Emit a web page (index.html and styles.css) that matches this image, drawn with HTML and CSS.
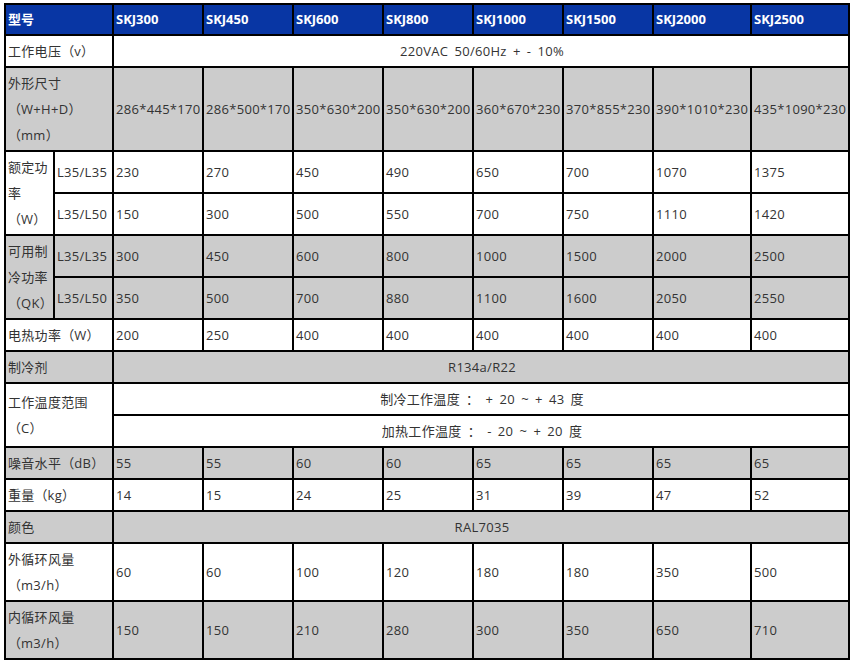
FILE: index.html
```html
<!DOCTYPE html>
<html lang="zh-CN">
<head>
<meta charset="utf-8">
<title>SKJ 参数表</title>
<link rel="stylesheet" href="styles.css">
</head>
<body>
<table class="spec">
  <colgroup>
    <col class="c-l1"><col class="c-l2">
    <col class="c-d"><col class="c-d"><col class="c-d"><col class="c-d"><col class="c-d"><col class="c-d">
    <col class="c-w"><col class="c-w">
  </colgroup>
  <tr class="head">
    <td colspan="2">型号</td><td>SKJ300</td><td>SKJ450</td><td>SKJ600</td><td>SKJ800</td><td>SKJ1000</td><td>SKJ1500</td><td>SKJ2000</td><td>SKJ2500</td>
  </tr>
  <tr class="white">
    <td colspan="2">工作电压<span class="par">（</span>v<span class="par">）</span></td><td colspan="8" class="center">220VAC 50/60Hz + - 10%</td>
  </tr>
  <tr class="gray">
    <td colspan="2">外形尺寸<br><span class="par">（</span>W+H+D<span class="par">）</span><br><span class="par">（</span>mm<span class="par">）</span></td><td>286*445*170</td><td>286*500*170</td><td>350*630*200</td><td>350*630*200</td><td>360*670*230</td><td>370*855*230</td><td>390*1010*230</td><td>435*1090*230</td>
  </tr>
  <tr class="white">
    <td rowspan="2">额定功<br>率<br><span class="par">（</span>W<span class="par">）</span></td><td>L35/L35</td><td>230</td><td>270</td><td>450</td><td>490</td><td>650</td><td>700</td><td>1070</td><td>1375</td>
  </tr>
  <tr class="white">
    <td>L35/L50</td><td>150</td><td>300</td><td>500</td><td>550</td><td>700</td><td>750</td><td>1110</td><td>1420</td>
  </tr>
  <tr class="gray">
    <td rowspan="2">可用制<br>冷功率<br><span class="par">（</span>QK<span class="par">）</span></td><td>L35/L35</td><td>300</td><td>450</td><td>600</td><td>800</td><td>1000</td><td>1500</td><td>2000</td><td>2500</td>
  </tr>
  <tr class="gray">
    <td>L35/L50</td><td>350</td><td>500</td><td>700</td><td>880</td><td>1100</td><td>1600</td><td>2050</td><td>2550</td>
  </tr>
  <tr class="white">
    <td colspan="2">电热功率<span class="par">（</span>W<span class="par">）</span></td><td>200</td><td>250</td><td>400</td><td>400</td><td>400</td><td>400</td><td>400</td><td>400</td>
  </tr>
  <tr class="gray">
    <td colspan="2">制冷剂</td><td colspan="8" class="center">R134a/R22</td>
  </tr>
  <tr class="white">
    <td colspan="2" rowspan="2">工作温度范围<br><span class="par">（</span>C<span class="par">）</span></td><td colspan="8" class="center">制冷工作温度 ： + 20 ~ + 43 度</td>
  </tr>
  <tr class="white">
    <td colspan="8" class="center">加热工作温度 ： - 20 ~ + 20 度</td>
  </tr>
  <tr class="gray">
    <td colspan="2">噪音水平<span class="par">（</span>dB<span class="par">）</span></td><td>55</td><td>55</td><td>60</td><td>60</td><td>65</td><td>65</td><td>65</td><td>65</td>
  </tr>
  <tr class="white">
    <td colspan="2">重量<span class="par">（</span>kg<span class="par">）</span></td><td>14</td><td>15</td><td>24</td><td>25</td><td>31</td><td>39</td><td>47</td><td>52</td>
  </tr>
  <tr class="gray">
    <td colspan="2">颜色</td><td colspan="8" class="center">RAL7035</td>
  </tr>
  <tr class="white">
    <td colspan="2">外循环风量<br><span class="par">（</span>m3/h<span class="par">）</span></td><td>60</td><td>60</td><td>100</td><td>120</td><td>180</td><td>180</td><td>350</td><td>500</td>
  </tr>
  <tr class="gray">
    <td colspan="2">内循环风量<br><span class="par">（</span>m3/h<span class="par">）</span></td><td>150</td><td>150</td><td>210</td><td>280</td><td>300</td><td>350</td><td>650</td><td>710</td>
  </tr>
</table>
</body>
</html>
```

FILE: styles.css
```css
html, body {
  margin: 0;
  padding: 0;
  background: #ffffff;
}

body {
  font-family: "Open Sans", "Noto Sans CJK SC", sans-serif;
  font-size: 13px;
  color: #333333;
  letter-spacing: 0.3px;
  word-spacing: 2.5px;
  text-spacing-trim: space-all;
  font-kerning: none;
}

.spec {
  margin: 3px 0 0 4px;
  width: 846px;
  table-layout: fixed;
  border-collapse: collapse;
  border: 2px solid #000000;
}

.c-l1 { width: 49px; }
.c-l2 { width: 59px; }
.c-d { width: 90px; }
.c-w { width: 98px; }

.spec td {
  border: 2px solid #000000;
  padding: 2px 0 2px 2px;
  line-height: 26px;
  vertical-align: middle;
  white-space: nowrap;
  overflow: hidden;
}

.par {
  display: inline-block;
  width: 13px;
  text-align: center;
  letter-spacing: 0;
}

.spec .head td {
  background: #0836a4;
  color: #ffffff;
  font-weight: 700;
  line-height: 25px;
  letter-spacing: 0;
}

.spec .white td {
  background: #ffffff;
}

.spec .gray td {
  background: #cccccc;
}

.spec td.center {
  text-align: center;
}
```
